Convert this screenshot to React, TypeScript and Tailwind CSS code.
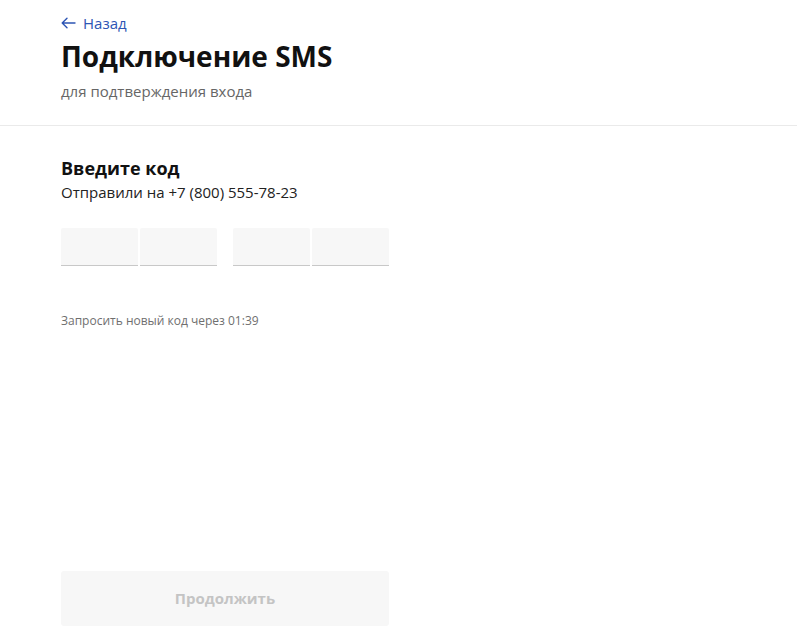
export default function App() {
  return (
    <div className="min-h-[637px] bg-white" style={{ fontFamily: '"Open Sans", sans-serif' }}>
      <header className="border-b border-[#eaeaea] px-[61px] pt-[13px] pb-[24px]">
        <a className="flex items-center gap-[7px] text-[15px] leading-[20px] text-[#2d55b4]">
          <svg width="15" height="12" viewBox="0 0 15 12" fill="none" stroke="#2d55b4" strokeWidth="1.4" strokeLinecap="round" strokeLinejoin="round">
            <path d="M14 6H1.5M6 1.2L1.2 6 6 10.8" />
          </svg>
          <span>Назад</span>
        </a>
        <h1 className="text-[28px] font-bold leading-[46px] text-[#111]">Подключение SMS</h1>
        <p className="mt-[2px] text-[15px] leading-[20px] text-[#666]">для подтверждения входа</p>
      </header>
      <main className="px-[61px] pt-[30px]">
        <h2 className="text-[18px] font-bold leading-[24px] text-[#111]">Введите код</h2>
        <p className="text-[15px] leading-[24px] text-[#222]">Отправили на +7 (800) 555-78-23</p>
        <div className="mt-[24px] flex gap-[16px]">
          <div className="flex gap-[2px]">
            <div className="h-[38px] w-[77px] rounded-t-[2px] border-b border-[#c8c8c8] bg-[#f7f7f7]" />
            <div className="h-[38px] w-[77px] rounded-t-[2px] border-b border-[#c8c8c8] bg-[#f7f7f7]" />
          </div>
          <div className="flex gap-[2px]">
            <div className="h-[38px] w-[77px] rounded-t-[2px] border-b border-[#c8c8c8] bg-[#f7f7f7]" />
            <div className="h-[38px] w-[77px] rounded-t-[2px] border-b border-[#c8c8c8] bg-[#f7f7f7]" />
          </div>
        </div>
        <p className="mt-[46px] text-[12px] leading-[18px] text-[#6f6f6f]">Запросить новый код через 01:39</p>
        <button className="mt-[241px] flex h-[55px] w-[328px] items-center justify-center rounded-[3px] bg-[#f7f7f7] text-[15px] font-bold text-[#c4c4c4]">
          Продолжить
        </button>
      </main>
    </div>
  );
}
